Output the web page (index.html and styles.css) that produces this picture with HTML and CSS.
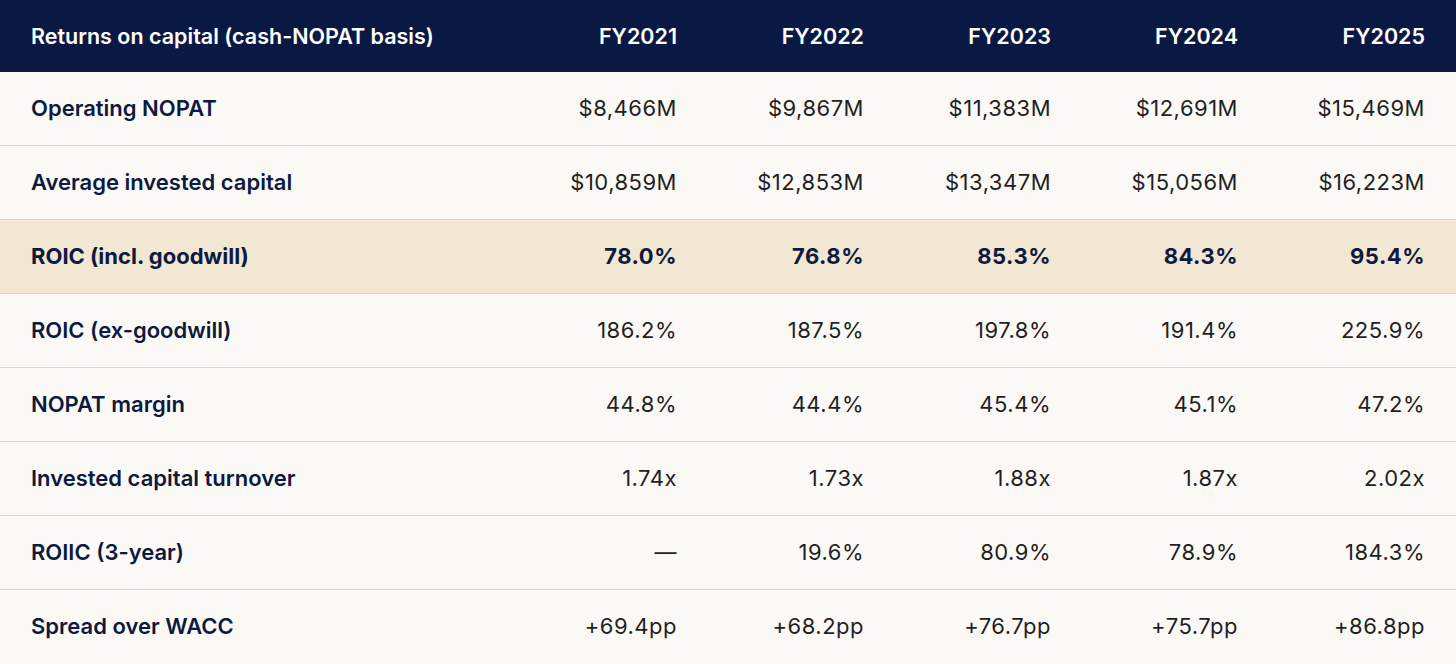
FILE: index.html
```html
<!DOCTYPE html>
<html>
<head>
<meta charset="utf-8">
<link rel="stylesheet" href="styles.css">
</head>
<body>
<table class="roc">
  <colgroup>
    <col class="c-label">
    <col class="c-val"><col class="c-val"><col class="c-val"><col class="c-val"><col class="c-val">
  </colgroup>
  <thead>
    <tr>
      <th class="label">Returns on capital (cash-NOPAT basis)</th>
      <th>FY2021</th><th>FY2022</th><th>FY2023</th><th>FY2024</th><th>FY2025</th>
    </tr>
  </thead>
  <tbody>
    <tr><td class="label">Operating NOPAT</td><td>$8,466M</td><td>$9,867M</td><td>$11,383M</td><td>$12,691M</td><td>$15,469M</td></tr>
    <tr><td class="label">Average invested capital</td><td>$10,859M</td><td>$12,853M</td><td>$13,347M</td><td>$15,056M</td><td>$16,223M</td></tr>
    <tr class="hl"><td class="label">ROIC (incl. goodwill)</td><td>78.0%</td><td>76.8%</td><td>85.3%</td><td>84.3%</td><td>95.4%</td></tr>
    <tr><td class="label">ROIC (ex-goodwill)</td><td>186.2%</td><td>187.5%</td><td>197.8%</td><td>191.4%</td><td>225.9%</td></tr>
    <tr><td class="label">NOPAT margin</td><td>44.8%</td><td>44.4%</td><td>45.4%</td><td>45.1%</td><td>47.2%</td></tr>
    <tr><td class="label">Invested capital turnover</td><td>1.74x</td><td>1.73x</td><td>1.88x</td><td>1.87x</td><td>2.02x</td></tr>
    <tr><td class="label">ROIIC (3-year)</td><td>—</td><td>19.6%</td><td>80.9%</td><td>78.9%</td><td>184.3%</td></tr>
    <tr><td class="label">Spread over WACC</td><td>+69.4pp</td><td>+68.2pp</td><td>+76.7pp</td><td>+75.7pp</td><td>+86.8pp</td></tr>
  </tbody>
</table>
</body>
</html>
```
FILE: styles.css
```css
html, body {
  margin: 0;
  padding: 0;
  background: #fbf9f5;
}
body {
  font-family: Inter, "Noto Sans", sans-serif;
  color: #1f1f24;
}
.roc {
  width: 100%;
  border-collapse: collapse;
  table-layout: fixed;
}
.roc .c-val {
  width: 187px;
}
.roc th, .roc td {
  box-sizing: border-box;
  text-align: right;
  padding: 0 31px 0 0;
  font-size: 22px;
  white-space: nowrap;
}
.roc th.label, .roc td.label {
  text-align: left;
  padding-left: 31px;
}
.roc thead th {
  background: #0a1944;
  color: #ffffff;
  font-weight: 600;
  height: 72px;
  font-size: 21.5px;
}
.roc tbody td {
  height: 74px;
  border-top: 1.5px solid #dcd6cc;
  font-weight: 400;
  letter-spacing: 0.5px;
}
.roc tbody tr:first-child td {
  border-top: none;
  height: 73px;
}
.roc tbody td.label {
  font-weight: 600;
  color: #0d1a40;
  letter-spacing: 0;
}
.roc tr.hl td {
  background: #f2e7d2;
  font-weight: 700;
  color: #0d1a40;
}
```
